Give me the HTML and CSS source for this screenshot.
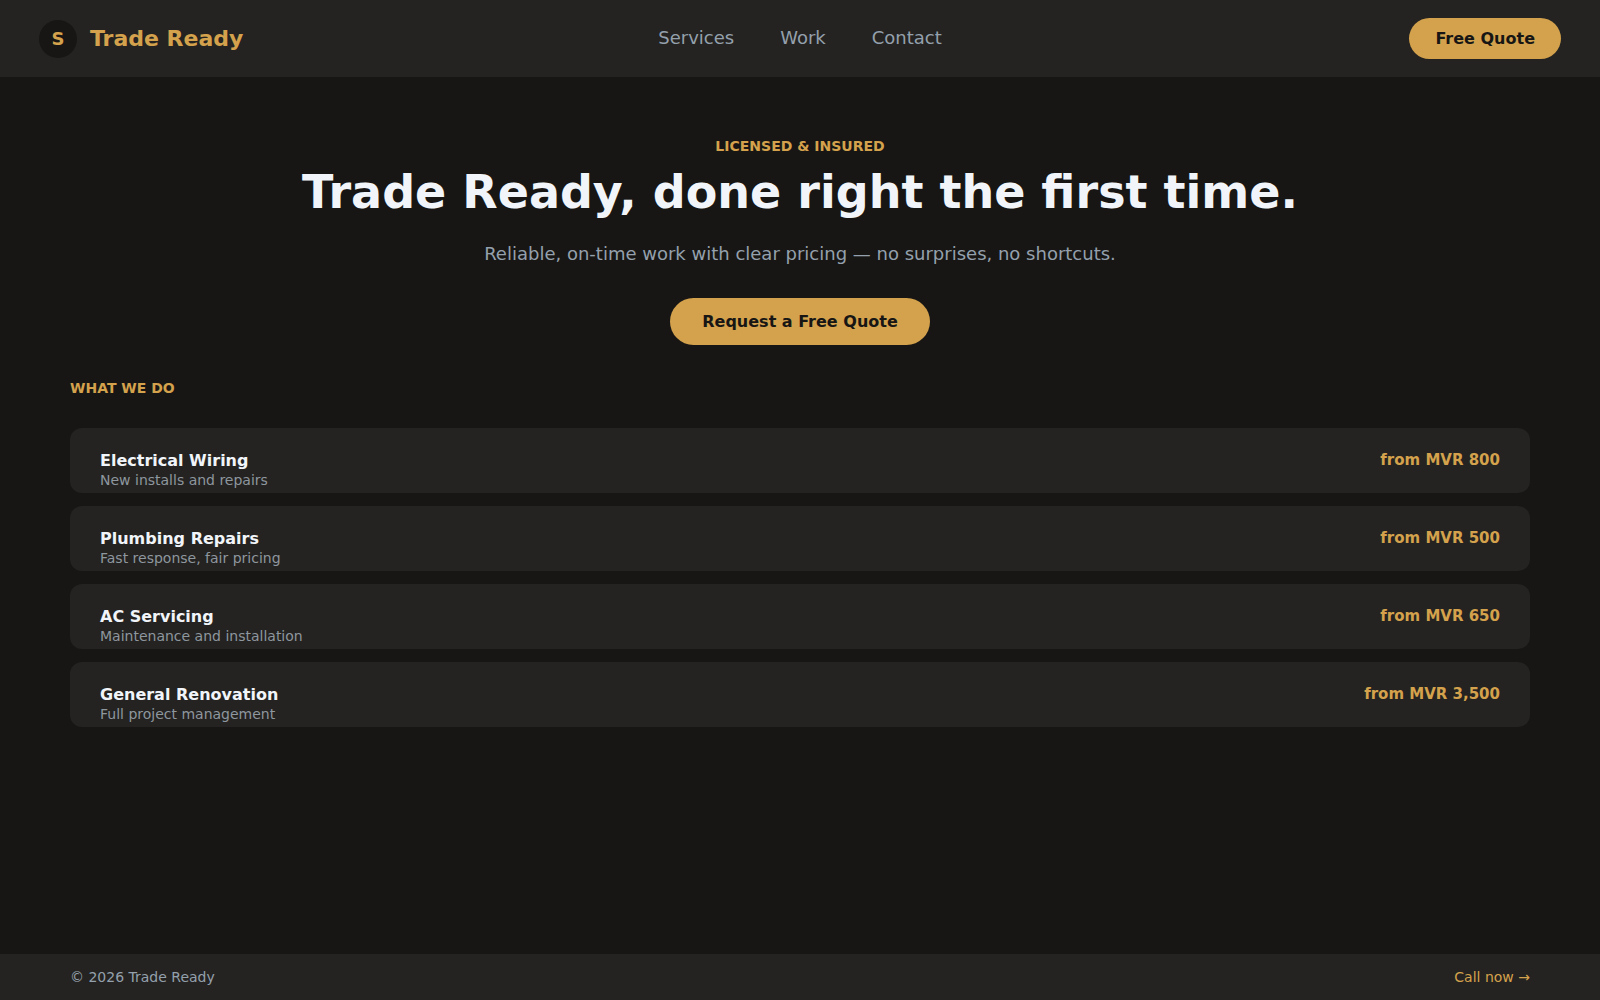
FILE: index.html
```html
<!DOCTYPE html>
<html lang="en">
<head>
    <meta charset="UTF-8">
    <meta name="viewport" content="width=device-width, initial-scale=1.0">
    <title>Trade Ready</title>
    <link rel="stylesheet" href="styles.css">
</head>
<body>

<header class="site-header">
    <a class="brand" href="#">
        <span class="brand-mark">S</span>
        <span class="brand-name">Trade Ready</span>
    </a>
    <nav class="site-nav">
        <a href="#services">Services</a>
        <a href="#work">Work</a>
        <a href="#contact">Contact</a>
    </nav>
    <button type="button" class="button header-button">Free Quote</button>
</header>

<main>
    <section class="hero">
        <p class="eyebrow">LICENSED &amp; INSURED</p>
        <h1>Trade Ready, done right the first time.</h1>
        <p class="hero-text">Reliable, on-time work with clear pricing — no surprises, no shortcuts.</p>
        <button type="button" class="button hero-button">Request a Free Quote</button>
    </section>

    <section class="services" id="services">
        <h2 class="eyebrow">WHAT WE DO</h2>
        <ul class="service-list">
            <li class="service">
                <div>
                    <h3>Electrical Wiring</h3>
                    <p>New installs and repairs</p>
                </div>
                <span class="price">from MVR 800</span>
            </li>
            <li class="service">
                <div>
                    <h3>Plumbing Repairs</h3>
                    <p>Fast response, fair pricing</p>
                </div>
                <span class="price">from MVR 500</span>
            </li>
            <li class="service">
                <div>
                    <h3>AC Servicing</h3>
                    <p>Maintenance and installation</p>
                </div>
                <span class="price">from MVR 650</span>
            </li>
            <li class="service">
                <div>
                    <h3>General Renovation</h3>
                    <p>Full project management</p>
                </div>
                <span class="price">from MVR 3,500</span>
            </li>
        </ul>
    </section>
</main>

<footer class="site-footer" id="contact">
    <span>© 2026 Trade Ready</span>
    <a href="#">Call now →</a>
</footer>

</body>
</html>
```
FILE: styles.css
```css
* {
    box-sizing: border-box;
}
body {
    font-family: "DejaVu Sans", sans-serif;
    margin: 0;
    min-height: 100vh;
    display: flex;
    flex-direction: column;
    background-color: #171614;
    color: #f1f5f9;
}
h1, h2, h3, p, ul {
    margin: 0;
    padding: 0;
}
a {
    text-decoration: none;
}
main {
    flex: 1;
}

/* Header */
.site-header {
    display: grid;
    grid-template-columns: 1fr auto 1fr;
    align-items: center;
    padding: 18px 39px;
    background-color: #242321;
}
.brand {
    display: flex;
    align-items: center;
    gap: 13px;
    color: #d4a24c;
    font-weight: bold;
}
.brand-mark {
    display: flex;
    align-items: center;
    justify-content: center;
    width: 38px;
    height: 38px;
    border-radius: 50%;
    background-color: #171614;
    font-size: 18px;
}
.brand-name {
    font-size: 22px;
}
.site-nav {
    display: flex;
    gap: 46px;
    padding-bottom: 2px;
}
.site-nav a {
    color: #94a0ac;
    font-size: 18px;
}
.button {
    border: none;
    border-radius: 24px;
    background-color: #d4a24c;
    color: #171614;
    font-family: inherit;
    font-size: 16px;
    font-weight: bold;
    line-height: 19px;
    cursor: pointer;
}
.button:hover {
    background-color: #e0b265;
}
.header-button {
    justify-self: end;
    padding: 11px 26px;
}

/* Hero */
.hero {
    display: flex;
    flex-direction: column;
    align-items: center;
    padding: 60px 40px 34px;
    text-align: center;
}
.eyebrow {
    color: #d4a24c;
    font-size: 14px;
    font-weight: bold;
    line-height: 18px;
}
.hero h1 {
    margin-top: 10px;
    font-size: 46px;
    line-height: 54px;
}
.hero-text {
    margin-top: 24px;
    color: #94a0ac;
    font-size: 18px;
    line-height: 22px;
}
.hero-button {
    margin-top: 33px;
    padding: 14px 32px;
}

/* Services */
.services {
    padding: 0 70px 40px;
}
.service-list {
    display: grid;
    gap: 13px;
    margin-top: 31px;
    list-style: none;
}
.service {
    display: flex;
    justify-content: space-between;
    padding: 22px 30px 4px;
    border-radius: 12px;
    background-color: #242321;
}
.service h3 {
    font-size: 16px;
    line-height: 22px;
}
.service p {
    color: #8e969e;
    font-size: 14px;
    line-height: 17px;
}
.price {
    color: #d4a24c;
    font-size: 15px;
    font-weight: bold;
    line-height: 20px;
}

/* Footer */
.site-footer {
    display: flex;
    justify-content: space-between;
    padding: 14px 70px;
    background-color: #242321;
    color: #94a0ac;
    font-size: 14px;
    line-height: 18px;
}
.site-footer a {
    color: #d4a24c;
}
```
